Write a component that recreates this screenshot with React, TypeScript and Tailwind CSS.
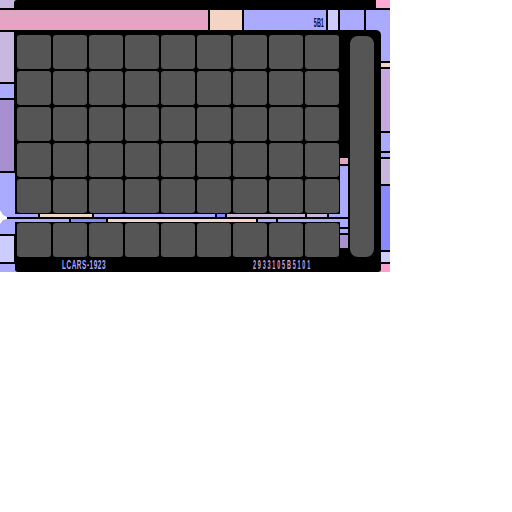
const cells = Array.from({ length: 9 });
const rows = Array.from({ length: 5 });

function Cell() {
  return <div className="h-[34px] w-[34px] rounded-[3px] bg-[#555555]" />;
}

function Row() {
  return (
    <div className="flex gap-[2px]">
      {cells.map((_, i) => (
        <Cell key={i} />
      ))}
    </div>
  );
}

export default function App() {
  return (
    <div className="relative h-[272px] w-[390px] overflow-hidden bg-black font-['Liberation_Sans',sans-serif]">
      {/* top strip */}
      <div className="flex h-[8px] bg-[#c8b8e0]">
        <div className="w-[14px]" />
        <div className="flex-1 rounded-tl-[3px] bg-black" />
        <div className="w-[14px] bg-[#ffaad4]" />
      </div>

      {/* header bar */}
      <div className="mt-[2px] flex h-[20px] gap-[2px]">
        <div className="w-[208px] bg-[#e4a4c4]" />
        <div className="w-[32px] bg-[#f4d4c4]" />
        <div className="flex w-[82px] items-end justify-end bg-[#aaaaff] pr-[2px] pb-[1px]">
          <span className="origin-right scale-x-[0.42] text-[13px] font-bold leading-[12px] text-[#101030]">5B1</span>
        </div>
        <div className="w-[10px] bg-[#ccccff]" />
        <div className="w-[24px] bg-[#aaaaff]" />
        <div className="w-[24px] bg-[#aaaaff]" />
      </div>

      <div className="flex h-[242px]">
        {/* left column */}
        <div className="relative z-0 -mr-[3px] flex w-[18px] flex-col pt-[2px]">
          <div className="mr-[4px] h-[50px] bg-[#c8b8e0]" />
          <div className="mr-[4px] mt-[2px] h-[14px] bg-[#aaaaff]" />
          <div className="mr-[4px] mt-[2px] h-[71px] bg-[#a890d0]" />
          <div className="mt-[2px] h-[44px] bg-[#aaaaff]" />
          <div className="mt-[2px] h-[15px] bg-[#aaaaff]" />
          <div className="mr-[4px] mt-[2px] h-[26px] bg-[#ccccff]" />
          <div className="mt-[2px] h-[8px] bg-[#aaaaff]" />
        </div>

        {/* main panel */}
        <div className="relative z-10 flex w-[366px] rounded-tr-[5px] rounded-bl-[3px] rounded-br-[3px] bg-black">
          <div className="flex w-[333px] flex-col">
            <div className="flex pt-[5px]">
              <div className="ml-[2px] flex flex-col gap-[2px] pb-[1px]">
                {rows.map((_, i) => (
                  <Row key={i} />
                ))}
              </div>
              <div className="ml-[1px] flex w-[8px] flex-col justify-end gap-[2px]">
                <div className="h-[6px] bg-[#e4a4c4]" />
                <div className="h-[48px] bg-[#aaaaff]" />
              </div>
            </div>

            <div className="flex h-[3px] gap-[2px]">
              <div className="w-[23px] bg-[#aaaaff]" />
              <div className="w-[52px] bg-[#f4d4c4]" />
              <div className="w-[121px] bg-[#aaaaff]" />
              <div className="w-[8px] bg-[#8888ff]" />
              <div className="w-[78px] bg-[#c8b8e0]" />
              <div className="w-[20px] bg-[#c8b8e0]" />
              <div className="flex-1 bg-[#aaaaff]" />
            </div>
            <div className="mt-[2px] flex h-[3px] gap-[2px]">
              <div className="w-[54px] bg-[#aaaaff]" />
              <div className="w-[35px] bg-[#8888ff]" />
              <div className="w-[148px] bg-[#f4d4c4]" />
              <div className="w-[18px] bg-[#aaaaff]" />
              <div className="flex-1 bg-[#aaaaff]" />
            </div>

            <div className="mt-[1px] flex">
              <div className="ml-[2px]">
                <Row />
              </div>
              <div className="ml-[1px] flex w-[8px] flex-col">
                <div className="-mt-[1px] h-[5px] bg-[#aaaaff]" />
                <div className="mt-[2px] h-[4px] bg-[#aaaaff]" />
                <div className="mt-[2px] h-[13px] bg-[#a890d0]" />
              </div>
            </div>

            <div className="flex h-[15px] items-center">
              <span className="ml-[47px] w-[191px] shrink-0 origin-left scale-x-[0.5] whitespace-nowrap text-[13px] font-bold leading-[12px] tracking-[1px] text-[#aaaaff]">
                LCARS-1923
              </span>
              <span className="shrink-0 origin-left scale-x-[0.42] whitespace-nowrap text-[13px] font-bold leading-[12px] tracking-[4.3px] text-[#c8a8e0]">
                2933105B5101
              </span>
            </div>
          </div>

          <div className="ml-[2px] mt-[6px] h-[221px] w-[24px] rounded-[8px] bg-[#555555]" />
        </div>

        {/* right column */}
        <div className="relative z-0 -ml-[5px] flex w-[14px] flex-col">
          <div className="h-[31px] bg-[#aaaaff]" />
          <div className="mt-[2px] h-[4px] bg-[#f4d4c4]" />
          <div className="mt-[2px] h-[62px] bg-[#c8a8e0]" />
          <div className="mt-[2px] h-[18px] bg-[#aaaaff]" />
          <div className="mt-[2px] h-[5px] bg-[#aaaaff]" />
          <div className="mt-[2px] h-[25px] bg-[#c8b8e0]" />
          <div className="mt-[2px] h-[64px] bg-[#8888ff]" />
          <div className="mt-[2px] h-[10px] bg-[#ccccff]" />
          <div className="mt-[2px] h-[8px] rounded-tl-[4px] bg-[#ffa0c8]" />
        </div>
      </div>

      {/* white spike on the left elbow */}
      <svg className="absolute left-0 top-[210px] z-20" width="8" height="14" viewBox="0 0 8 14">
        <polygon points="0,0 3,5 7,7 7,9 3,10 0,14" fill="#ffffff" />
      </svg>
    </div>
  );
}
